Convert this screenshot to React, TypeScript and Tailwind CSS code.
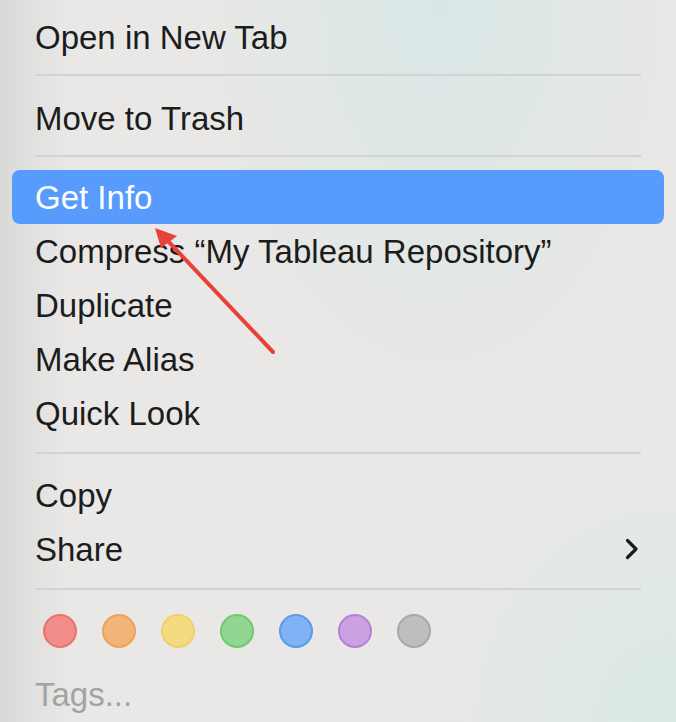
const tagColors = [
    { fill: 'bg-[#f08c89]', ring: 'border-[#e8736f]' },
    { fill: 'bg-[#f2b477]', ring: 'border-[#eba35f]' },
    { fill: 'bg-[#f5db80]', ring: 'border-[#efd06c]' },
    { fill: 'bg-[#91d692]', ring: 'border-[#6fc872]' },
    { fill: 'bg-[#80b2f6]', ring: 'border-[#5c99f0]' },
    { fill: 'bg-[#caa1e1]', ring: 'border-[#b382d6]' },
    { fill: 'bg-[#bebebe]', ring: 'border-[#a8a8a8]' },
]

function Item({ label, active, submenu }: { label: string; active?: boolean; submenu?: boolean }) {
    return (
        <div
            className={`mx-3 flex h-[54px] items-center justify-between rounded-lg pl-[23px] pr-[26px] ${
                active ? 'bg-[#579bfc] text-white' : 'text-[#1c1c1c]'
            }`}
        >
            <span>{label}</span>
            {submenu && (
                <svg width="14" height="22" viewBox="0 0 14 22" className="mr-[-1px]">
                    <polyline
                        points="2.5,2.5 11,11 2.5,19.5"
                        fill="none"
                        stroke="#1c1c1c"
                        strokeWidth="3.2"
                        strokeLinecap="round"
                        strokeLinejoin="round"
                    />
                </svg>
            )}
        </div>
    )
}

function Separator({ top = 'mt-3', bottom = 'mb-[14px]' }: { top?: string; bottom?: string }) {
    return <div className={`ml-[35px] mr-[35px] h-[2px] bg-[#d3d3d2] ${top} ${bottom}`} />
}

export default function App() {
    return (
        <div
            className="relative h-[722px] w-[676px] overflow-hidden bg-[#e9e8e6] bg-[radial-gradient(ellipse_at_65%_0%,#d8e7e6_0%,rgba(233,232,230,0)_40%),radial-gradient(ellipse_at_100%_100%,#d9e9e6_0%,rgba(233,232,230,0)_28%),linear-gradient(90deg,#d9d9d7_0%,#e9e8e6_10%)] text-[33px] leading-none"
            style={{ fontFamily: '"Liberation Sans", Arial, sans-serif' }}
        >
            <div className="pt-[10px]">
                <Item label="Open in New Tab" />
                <Separator top="mt-[10px]" bottom="mb-[15px]" />
                <Item label="Move to Trash" />
                <Separator top="mt-[10px]" bottom="mb-[13px]" />
                <Item label="Get Info" active />
                <Item label="Compress “My Tableau Repository”" />
                <Item label="Duplicate" />
                <Item label="Make Alias" />
                <Item label="Quick Look" />
                <Separator top="mt-3" bottom="mb-[14px]" />
                <Item label="Copy" />
                <Item label="Share" submenu />
                <Separator top="mt-3" bottom="mb-6" />

                {/* tag colours */}
                <div className="flex gap-[25px] pl-[43px]">
                    {tagColors.map((c, i) => (
                        <div key={i} className={`h-[34px] w-[34px] rounded-full border-2 ${c.fill} ${c.ring}`} />
                    ))}
                </div>
                <div className="pl-[35px] pt-[30px] text-[#a3a3a3]">Tags...</div>
            </div>

            {/* annotation arrow */}
            <svg className="absolute left-0 top-0" width="676" height="722">
                <line x1="273" y1="352" x2="166" y2="239" stroke="#e8413a" strokeWidth="4" strokeLinecap="round" />
                <polygon points="155,228 161,248 177,236" fill="#e8413a" />
            </svg>
        </div>
    )
}
